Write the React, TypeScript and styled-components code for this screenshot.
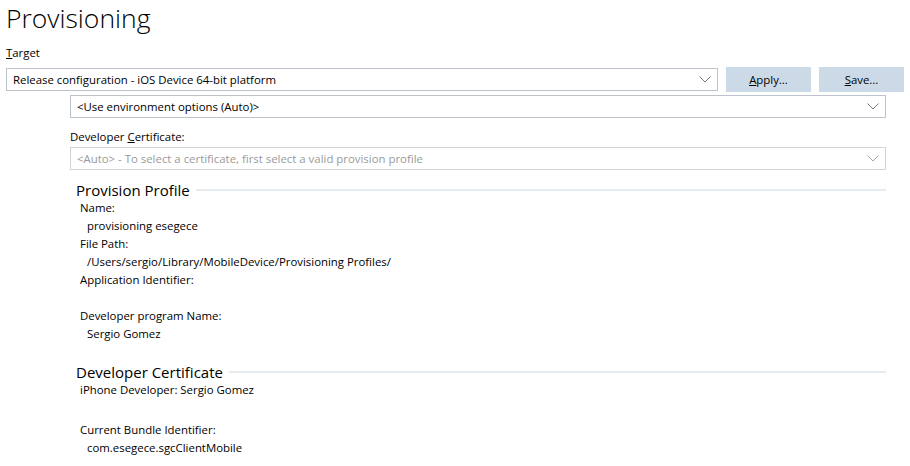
import React from "react";
import styled, { createGlobalStyle } from "styled-components";

const GlobalStyle = createGlobalStyle`
    html, body {
        margin: 0;
        padding: 0;
        background: #ffffff;
    }
    body {
        font-family: "Open Sans", "Noto Sans", "Liberation Sans", sans-serif;
        font-size: 11.4px;
        color: #000000;
    }
`;

const PageStyles = styled.div`
    width: 910px;
    height: 466px;
    padding: 0 6px;
    box-sizing: border-box;
    overflow: hidden;
`;

const TitleStyles = styled.h1`
    margin: 0;
    height: 38px;
    line-height: 36px;
    font-size: 26.5px;
    font-weight: 300;
`;

const LabelStyles = styled.div<{ $gap?: number }>`
    height: 20px;
    line-height: 20px;
    margin-top: ${(p) => (p.$gap === undefined ? 5 : p.$gap)}px;
`;

const Key = styled.span`
    text-decoration: underline;
`;

const TargetRowStyles = styled.div`
    display: flex;
    gap: 8px;
    margin-top: 4px;
    align-items: center;
`;

const ComboStyles = styled.div<{ $disabled?: boolean }>`
    flex: 1;
    height: 23px;
    box-sizing: border-box;
    display: flex;
    align-items: center;
    justify-content: space-between;
    padding: 0 6px 0 6px;
    border: 1px solid ${(p) => (p.$disabled ? "#cfd4d8" : "#bcc3ca")};
    color: ${(p) => (p.$disabled ? "#9a9a9a" : "#000000")};
    background: #ffffff;
    white-space: nowrap;
`;

const ButtonStyles = styled.div`
    width: 85px;
    height: 25px;
    line-height: 25px;
    text-align: center;
    background: #ccdae7;
`;

const IndentStyles = styled.div`
    margin: 3px 18px 0 64px;
`;

const GroupStyles = styled.div<{ $gap: number }>`
    margin-top: ${(p) => p.$gap}px;
`;

const GroupHeaderStyles = styled.div`
    display: flex;
    align-items: center;
    gap: 6px;
    height: 19px;
    padding-left: 6px;
    font-size: 15px;
    &::after {
        content: "";
        flex: 1;
        height: 2px;
        background: #e6ebf0;
    }
`;

const FieldStyles = styled.div<{ $value?: boolean }>`
    height: 18px;
    line-height: 18px;
    padding-left: ${(p) => (p.$value ? 17 : 10)}px;
    white-space: nowrap;
`;

const SpacerStyles = styled.div<{ $height: number }>`
    height: ${(p) => p.$height}px;
`;

const Chevron: React.FC<{ color: string }> = ({ color }) => (
    <svg width="12" height="7" viewBox="0 0 12 7">
        <polyline points="0.5,0.5 6,6 11.5,0.5" fill="none" stroke={color} strokeWidth="1" />
    </svg>
);

const Combo: React.FC<{ text: string; disabled?: boolean }> = ({ text, disabled }) => (
    <ComboStyles $disabled={disabled}>
        <span>{text}</span>
        <Chevron color={disabled ? "#a8a8a8" : "#7a7a7a"} />
    </ComboStyles>
);

export default function App(): React.ReactElement {
    return (
        <PageStyles>
            <GlobalStyle />
            <TitleStyles>Provisioning</TitleStyles>
            <LabelStyles>
                <Key>T</Key>arget
            </LabelStyles>
            <TargetRowStyles>
                <Combo text="Release configuration - iOS Device 64-bit platform" />
                <ButtonStyles>
                    <Key>A</Key>pply...
                </ButtonStyles>
                <ButtonStyles>
                    <Key>S</Key>ave...
                </ButtonStyles>
            </TargetRowStyles>
            <IndentStyles>
                <Combo text="<Use environment options (Auto)>" />
                <LabelStyles $gap={9}>
                    Developer <Key>C</Key>ertificate:
                </LabelStyles>
                <Combo
                    disabled
                    text="<Auto> - To select a certificate, first select a valid provision profile"
                />
                <GroupStyles $gap={10}>
                    <GroupHeaderStyles>Provision Profile</GroupHeaderStyles>
                    <FieldStyles>Name:</FieldStyles>
                    <FieldStyles $value>provisioning esegece</FieldStyles>
                    <FieldStyles>File Path:</FieldStyles>
                    <FieldStyles $value>/Users/sergio/Library/MobileDevice/Provisioning Profiles/</FieldStyles>
                    <FieldStyles>Application Identifier:</FieldStyles>
                    <SpacerStyles $height={18} />
                    <FieldStyles>Developer program Name:</FieldStyles>
                    <FieldStyles $value>Sergio Gomez</FieldStyles>
                </GroupStyles>
                <GroupStyles $gap={19}>
                    <GroupHeaderStyles>Developer Certificate</GroupHeaderStyles>
                    <FieldStyles>iPhone Developer: Sergio Gomez</FieldStyles>
                    <SpacerStyles $height={22} />
                    <FieldStyles>Current Bundle Identifier:</FieldStyles>
                    <FieldStyles $value>com.esegece.sgcClientMobile</FieldStyles>
                </GroupStyles>
            </IndentStyles>
        </PageStyles>
    );
}
